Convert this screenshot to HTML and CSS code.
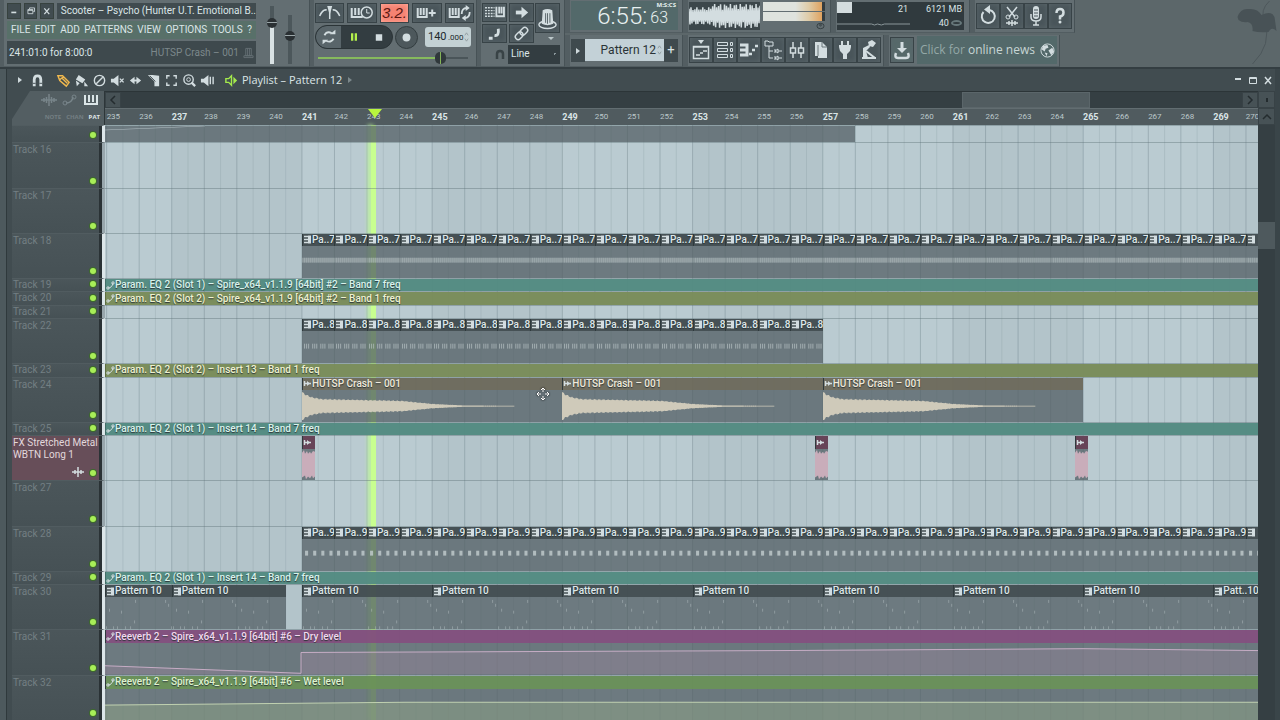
FILE: index.html
```
<!DOCTYPE html>
<html lang="en">
<head>
    <meta charset="UTF-8">
    <meta name="viewport" content="width=device-width, initial-scale=1.0">
    <title>Playlist - Pattern 12</title>
    <link rel="stylesheet" href="styles.css">
</head>
<body>
    <header class="toolbar">
        <section class="panel main-panel">
            <div class="main-left">
                <div class="title-row">
                    <button class="win-btn" aria-label="Minimize"><svg viewBox="0 0 14 14"><path d="M4 9h6" stroke-width="2"/></svg></button>
                    <button class="win-btn" aria-label="Restore"><svg viewBox="0 0 14 14"><path d="M5.500 5V3.500h6V8H10M3.500 5.500h6v5h-6zM3.500 6.500h6"/></svg></button>
                    <button class="win-btn" aria-label="Close"><svg viewBox="0 0 14 14"><path d="M4 4l6 7M10 4l-6 7" stroke-width="1.500"/></svg></button>
                    <div class="song-title">Scooter – Psycho (Hunter U.T. Emotional B..</div>
                </div>
                <nav class="menu">
                    <button>FILE</button><button>EDIT</button><button>ADD</button><button>PATTERNS</button><button>VIEW</button><button>OPTIONS</button><button>TOOLS</button><button>?</button>
                </nav>
                <div class="hint">
                    <span>241:01:0 for 8:00:0</span>
                    <span class="hint-clip">HUTSP Crash – 001 <svg viewBox="0 0 12 14"><path d="M3 2h6v8H3zM1 10h10v2H1zM5 2v8M7 2v8"/></svg></span>
                </div>
            </div>
            <input class="fader fader-volume" type="range" value="74" aria-label="Main volume">
            <input class="fader fader-pitch" type="range" value="58" aria-label="Main pitch">
        </section>

        <section class="panel transport">
            <div class="btn-row">
                <button class="tool" aria-label="Metronome"><svg viewBox="1 1 26 18"><path d="M4 13Q7 6 11 7M17 7Q21 6 24 13M14 7v9" stroke-width="1.500"/><path class="fill" d="M11.500 3h5l-2.500 9z"/></svg></button>
                <button class="tool" aria-label="Wait for input"><svg viewBox="1 1 26 18"><path d="M4 5v9h11M7.500 5v7M11 5v7" stroke-width="2"/><circle cx="19" cy="9.500" r="5.500" stroke-width="1.500"/><path d="M19 6v4h3"/></svg></button>
                <button class="tool count" aria-label="Countdown">3.2.</button>
                <button class="tool" aria-label="Blend recording"><svg viewBox="1 1 26 18"><path d="M5 5v9h9V5M8 5v7M11 5v7M16 10h7M19.500 6.500v7" stroke-width="2"/></svg></button>
                <button class="tool" aria-label="Loop recording"><svg viewBox="1 1 26 18"><path d="M4 5v9h9V5M7 5v7M10 5v7" stroke-width="2"/><path d="M16 11q0-6 5-6M24 9q0 6-5 6" stroke-width="1.800"/><path class="fill" d="M20 2l4 3-4 3zM20 12v6l-4-3z"/></svg></button>
            </div>
            <div class="play-row">
                <div class="play-group">
                    <button class="loop-btn" aria-label="Song mode"><svg viewBox="0 0 24 24"><path d="M7 10q3-5 8-2M17 14q-3 5-8 2" stroke-width="2"/><path class="fill" d="M13 9h6V4zM11 15H5v5z"/></svg></button>
                    <button class="pause-btn" aria-label="Pause"><svg viewBox="0 0 24 24"><path d="M10 8v8M14 8v8" stroke-width="2.500"/></svg></button>
                    <button class="stop-btn" aria-label="Stop"><svg viewBox="0 0 24 24"><path class="fill" d="M8.500 9h7v7h-7z"/></svg></button>
                </div>
                <button class="record-btn" aria-label="Record"><svg viewBox="0 0 24 24"><circle class="fill" cx="12" cy="12" r="4.500"/></svg></button>
                <label class="tempo"><input type="text" value="140" aria-label="Tempo"><small>.000</small><svg viewBox="0 0 6 12"><path d="M1 4l2-3 2 3M1 8l2 3 2-3"/></svg></label>
            </div>
            <input class="slider" type="range" value="84" aria-label="Song position">
        </section>

        <section class="panel snap">
            <div class="snap-grid">
                <button class="tool" aria-label="Typing keyboard"><svg viewBox="1 1 24 18"><path d="M3 5h10M3 8h10M3 11h10M3 14h10" stroke-dasharray="2 1" stroke-width="1.500"/><path d="M15 4v10h8V4M18 4v7M20.500 4v7" stroke-width="2"/></svg></button>
                <button class="tool" aria-label="Follow playback"><svg viewBox="1 1 24 18"><path d="M7 10h8" stroke-width="4"/><path class="fill" d="M13 4l7 6-7 6z"/></svg></button>
                <button class="tool" aria-label="Step edit"><svg viewBox="1 1 24 18"><path d="M7 15h4M13 12q5 1 4-7" stroke-width="3"/></svg></button>
                <button class="tool" aria-label="Link"><svg viewBox="1 1 24 18"><g transform="rotate(-45 13 10)"><rect x="5" y="7" width="9" height="6" rx="3" stroke-width="1.500"/><rect x="12" y="7" width="9" height="6" rx="3" stroke-width="1.500"/></g></svg></button>
            </div>
            <button class="tool hat" aria-label="Multilink"><svg viewBox="1 1 24 28"><ellipse cx="13" cy="22" rx="9" ry="4" stroke-width="1.500"/><path class="fill" d="M8 7q5-3 10 0l1 14q-6 3-12 0z"/><path d="M11 10v10M13 10v11M15.500 10v10" stroke="#59656a"/></svg></button>
            <div class="snap-row">
                <svg class="magnet-dim" viewBox="0 0 12 12"><path d="M3 11V6q0-3 3-3t3 3v5" stroke-width="2.500"/></svg>
                <select aria-label="Snap"><option>Line</option></select>
            </div>
            <span class="snap-caret"></span>
        </section>

        <div class="panel-stack">
            <div class="stack-row">
                <section class="panel time-panel"><div class="time"><b>6:55:</b><span>63</span><small>M:S:CS</small></div></section>
                <section class="panel scope-panel">
                    <svg class="scope" id="scope" viewBox="0 0 72 28" preserveAspectRatio="none"></svg>
                    <div class="meters"><i></i><i></i><svg viewBox="0 0 10 8"><ellipse cx="5" cy="4" rx="4" ry="3"/><circle cx="5" cy="3" r="1"/></svg></div>
                </section>
                <section class="panel cpu-panel">
                    <div class="cpu"><span class="cpu-load">21</span><span>6121 MB</span><svg viewBox="0 0 74 12" preserveAspectRatio="none"><path d="M0 8h35l3 1 3-1 4 1 3-1h26"/></svg><span>40 <em></em></span></div>
                </section>
                <section class="panel btn-panel">
                    <button class="tool" aria-label="Undo"><svg viewBox="1 1 22 24"><path d="M7.500 9a6.500 6.500 0 1 0 6-2" stroke-width="2"/><path class="fill" d="M14 2v9L8 6.500z"/></svg></button>
                    <button class="tool" aria-label="Cut"><svg viewBox="1 1 22 24"><path d="M7 4l8 10M17 4L9 14M6 20h12M9 18v4M12 17v6M15 18v4" stroke-width="1.500"/><circle cx="8" cy="14" r="2"/><circle cx="16" cy="14" r="2"/></svg></button>
                    <button class="tool" aria-label="Record audio"><svg viewBox="1 1 22 24"><rect class="fill" x="9" y="3" width="6" height="13" rx="3"/><path d="M7 11v3q0 4 5 4t5-4v-3M12 18v4M9 22h6" stroke-width="1.500"/><path d="M10 7h4M10 10h4M10 13h4" stroke="#49555a"/></svg></button>
                    <button class="tool" aria-label="Help"><svg viewBox="1 1 22 24"><path d="M8.500 10q0-4 3.500-4t3.500 3.500-3.500 4v3" stroke-width="2.500"/><circle class="fill" cx="12" cy="19" r="1.500"/></svg></button>
                </section>
            </div>
            <div class="stack-row">
                <section class="panel pattern-panel">
                    <button class="small-btn" aria-label="Pattern menu"><span class="caret-right"></span></button>
                    <button class="pattern-name">Pattern 12 <svg viewBox="0 0 6 12"><path d="M1 4l2-3 2 3M1 8l2 3 2-3"/></svg></button>
                    <button class="small-btn" aria-label="Add pattern">+</button>
                </section>
                <section class="panel btn-panel">
                    <button class="tool" aria-label="Playlist"><svg viewBox="1 1 22 24"><path class="fill" d="M9 3h6l-3 4z"/><path d="M4.500 9.500h15v12h-15zM4 10h16M7 18h4M11 16h3M14 14h4" stroke-width="1.500"/></svg></button>
                    <button class="tool" aria-label="Channel rack"><svg viewBox="1 1 22 24"><path d="M4.500 5.500h10v3h-10zM4.500 11.500h10v3h-10zM4.500 17.500h10v3h-10zM17.500 5.500h2v3h-2zM17.500 11.500h2v3h-2zM17.500 17.500h2v3h-2z"/></svg></button>
                    <button class="tool" aria-label="Piano roll"><svg viewBox="1 1 22 24"><path d="M3 8h7M3 13h7M3 18h7M10 6.500v13" stroke-width="3"/><path d="M12 17h3M15 13h3M18 9h3" stroke-width="2.500"/></svg></button>
                    <button class="tool" aria-label="Browser"><svg viewBox="1 1 22 24"><path d="M4 8V4h3l1 1h4v4H4zM8 9v12h4M8 14h4M14 12v4M17 14h4M14 14l3-2v4zM14 19v4M14 21l3-2v4zM17 21h4"/></svg></button>
                    <button class="tool" aria-label="Mixer"><svg viewBox="1 1 22 24"><path d="M8 5v16M16 5v16" stroke-width="1.500"/><path class="hole" d="M5.500 11h5v5h-5zM13.500 11h5v5h-5z" stroke-width="1.500"/></svg></button>
                    <button class="tool" aria-label="Project picker"><svg viewBox="1 1 22 24"><path class="fill" d="M6 5h7l5 5v11H9v-2H6z"/><path d="M13 5v5h5M9 19V8" stroke="#6a767a"/></svg></button>
                    <button class="tool" aria-label="Plugins"><svg viewBox="1 1 22 24"><path d="M9 4v5M15 4v5" stroke-width="2"/><path class="fill" d="M6 8h12v2l-1 4-3 3v5h-4v-5l-3-3-1-4z"/></svg></button>
                    <button class="tool" aria-label="Touch controllers"><svg viewBox="1 1 22 24"><path class="fill" d="M11 5l4-2 4 3-3 4-4-1zM6 11l6-3 1 2-4 4 2 7H6z"/><path d="M5 21h14M9 14l9 7" stroke-width="2"/></svg></button>
                </section>
                <section class="panel news-panel">
                    <button class="tool download" aria-label="Download"><svg viewBox="1 1 22 24"><path d="M12 5v7" stroke-width="3"/><path class="fill" d="M7 11h10l-5 5z"/><path d="M6 16q-2 5 2 5h8q4 0 2-5" stroke-width="2.500"/></svg></button>
                    <a class="news" href="#">Click for <b>online news</b><svg viewBox="0 0 16 16"><circle cx="8" cy="8" r="7"/><path class="fill" d="M3 3l5-1 1 3-3 1-1 3-3-2zM9 8l4-3 2 4-3 4zM5 10l3 1-1 3z"/></svg></a>
                </section>
            </div>
        </div>
        <svg class="fruit" viewBox="0 0 40 66"><path d="M32 1Q22 10 27 22Q35 44 15 64" fill="none"/><path class="fruit-body" d="M0 17Q3 8 11 9Q20 8 24 15Q34 10 37 17L39 31Q34 26 31 32Q22 33 15 31Q16 23 10 22Q5 23 1 20Z"/></svg>
    </header>

    <main class="playlist">
        <div class="playlist-bar">
            <span class="caret-right"></span>
            <button aria-label="Snap to grid"><svg viewBox="0 0 16 16"><path d="M4.500 14V7q0-4 3.500-4t3.500 4v7" stroke-width="3"/><path d="M3 11h3M10 11h3" stroke="#414c50"/></svg></button>
            <span class="bar-gap"></span>
            <button class="draw" aria-label="Draw"><svg viewBox="0 0 16 16"><path d="M2 3l5 0 7 7-3 4-7-6zM4 7l4-3M6 5l6 6" stroke-width="1.500"/></svg></button>
            <button aria-label="Paint"><svg viewBox="0 0 16 16"><path class="fill" d="M5 2l7 5-3 4-7-4zM2 8l4 3-3 3zM11 9l4 5h-4z"/></svg></button>
            <button aria-label="Delete"><svg viewBox="0 0 16 16"><circle cx="8" cy="8" r="5.500" stroke-width="1.500"/><path d="M4.500 11.500l7-7" stroke-width="1.500"/></svg></button>
            <button aria-label="Mute"><svg viewBox="0 0 16 16"><path class="fill" d="M1 6h3l5-4v12l-5-4H1z"/><path d="M10.500 6l4 4M14.500 6l-4 4" stroke-width="1.500"/></svg></button>
            <button aria-label="Slip"><svg viewBox="0 0 16 16"><path d="M4 8h8" stroke-width="2"/><path class="fill" d="M7 4v8L2 8zM9 4v8l5-4z"/></svg></button>
            <button aria-label="Slice"><svg viewBox="0 0 16 16"><path class="fill" d="M2 2h5l7 1v11H9V9z"/><path d="M4 3l6 6" stroke="#414c50"/></svg></button>
            <button aria-label="Select"><svg viewBox="0 0 16 16"><path d="M3 6V3h3M10 3h3v3M13 10v3h-3M6 13H3v-3" stroke-width="1.500"/></svg></button>
            <button aria-label="Zoom"><svg viewBox="0 0 16 16"><circle cx="7" cy="7" r="5" stroke-width="1.500"/><circle cx="7" cy="7" r="2"/><path d="M10 10l4 4" stroke-width="2.500"/></svg></button>
            <button aria-label="Playback"><svg viewBox="0 0 16 16"><path class="fill" d="M1 6h3l5-4v12l-5-4H1z"/><path d="M11 4v8M14 4v8" stroke-width="1.500"/></svg></button>
            <span class="bar-gap"></span>
            <h1><svg viewBox="0 0 16 16"><path d="M2 6h3l3-3v10l-3-3H2z" stroke-width="1.500"/><path class="fill" d="M10 4l4 4-4 4z"/></svg>Playlist – Pattern 12 <span class="caret-right dim"></span></h1>
            <div class="window-controls">
                <button aria-label="Minimize"><svg viewBox="0 0 12 12"><path d="M3 5h6" stroke-width="2"/></svg></button>
                <button aria-label="Maximize"><svg viewBox="0 0 12 12"><path d="M2.500 3.500h7v6h-7zM2 4.500h8"/></svg></button>
                <button aria-label="Close"><svg viewBox="0 0 12 12"><path d="M3 3l6 7M9 3l-6 7" stroke-width="1.500"/></svg></button>
            </div>
        </div>

        <div class="playlist-top">
            <div class="corner">
                <div class="corner-icons">
                    <svg viewBox="0 0 18 12"><path d="M1 6h16M4 4v4M6.500 3v6M9 0v12M11.500 3v6M14 4v4" stroke-width="1.500"/></svg>
                    <svg viewBox="0 0 18 12"><path d="M5 9q6 0 7-6" stroke-width="1.500"/><circle cx="4" cy="9" r="2"/><circle cx="13" cy="3" r="2"/></svg>
                    <svg class="on" viewBox="0 0 18 12"><path d="M3 1v9h12V1M7 1v7M11 1v7" stroke-width="2"/></svg>
                </div>
                <div class="corner-names"><span>NOTE</span><span>CHAN</span><span class="on">PAT</span></div>
            </div>
            <div class="timeline">
                <div class="h-scroll"><button aria-label="Scroll left"><svg viewBox="0 0 12 12"><path d="M8 2L4 6l4 4"/></svg></button><div class="h-track"><div class="h-thumb"></div></div><button aria-label="Scroll right"><svg viewBox="0 0 12 12"><path d="M4 2l4 4-4 4"/></svg></button></div>
                <div class="ruler" id="ruler"></div>
            </div>
            <div class="side-buttons"><button aria-label="Zoom"><i></i></button><button aria-label="Scroll up"><svg viewBox="0 0 12 12"><path d="M2 8l4-4 4 4"/></svg></button></div>
        </div>

        <div class="playlist-body">
            <div class="tracks" id="tracks">
                <div class="backdrop"><svg id="grid" preserveAspectRatio="none"></svg><div class="playhead" id="playhead"></div></div>
                <svg class="move-cursor" viewBox="0 0 14 14"><path d="M7 1v4M7 9v4M1 7h4M9 7h4M5 3l2-2 2 2M5 11l2 2 2-2M3 5L1 7l2 2M11 5l2 2-2 2"/></svg>
            </div>
            <div class="v-scroll"><div class="v-thumb"></div></div>
        </div>
    </main>
    <script src="script.js"></script>
</body>
</html>
```

FILE: styles.css
```
* {
    box-sizing: border-box;
}
body {
    margin: 0;
    height: 100vh;
    overflow: hidden;
    display: flex;
    flex-direction: column;
    background: #3d484c;
    color: #dbe5e7;
    font-family: Roboto, "Open Sans", sans-serif;
    font-size: 10px;
    line-height: 12px;
}
button, input, select {
    font: inherit;
    color: inherit;
    padding: 0;
    margin: 0;
    border: 0;
    background: none;
}
svg {
    display: block;
    fill: none;
    stroke: #d3dde0;
}
svg .fill {
    fill: #d3dde0;
    stroke: none;
}
svg .hole {
    fill: #49555a;
}

/* Toolbar */
.toolbar {
    display: flex;
    height: 69px;
    flex: none;
    background: #5c676a;
    border-bottom: 2px solid #343e42;
}
.panel {
    background: #636e72;
    border-right: 1px solid #475256;
    border-bottom: 1px solid #525d61;
    border-left: 4px solid #535e62;
}
.main-panel {
    display: flex;
    width: 310px;
    padding: 3px 9px 2px 3px;
}
.main-left {
    width: 249px;
    display: flex;
    flex-direction: column;
    gap: 2px;
}
.title-row {
    display: flex;
    gap: 3px;
    height: 16px;
}
.win-btn {
    width: 14px;
    background: #414c50;
    border: 1px solid #37423f;
}
.song-title {
    flex: 1;
    background: #404b4f;
    padding-left: 4px;
    line-height: 16px;
    white-space: nowrap;
}
.menu {
    height: 18px;
    background: #587069;
    display: flex;
    align-items: center;
    justify-content: space-between;
    padding: 0 4px;
    font-size: 10px;
}
.hint {
    flex: 1;
    background: #3e494d;
    display: flex;
    align-items: center;
    justify-content: space-between;
    padding: 0 2px;
}
.hint-clip {
    color: #7c888b;
    display: flex;
    align-items: center;
    gap: 4px;
}
.hint-clip svg {
    width: 11px;
    height: 14px;
    stroke: #667175;
}
.fader {
    appearance: none;
    writing-mode: vertical-lr;
    direction: rtl;
    width: 18px;
    margin: 3px 0 0 7px;
    height: 58px;
    background: linear-gradient(90deg, transparent 7px, #4c575b 7px, #4c575b 11px, transparent 11px);
}
.fader-volume {
    background: linear-gradient(90deg, transparent 7px, #d9e2e4 7px, #d9e2e4 11px, transparent 11px) 0 20px no-repeat, linear-gradient(90deg, transparent 7px, #4c575b 7px, #4c575b 11px, transparent 11px);
}
.fader-pitch {
    margin: 12px 0 0;
    height: 49px;
}
.fader::-webkit-slider-thumb {
    appearance: none;
    width: 10px;
    height: 10px;
    border-radius: 5px;
    background: linear-gradient(#2a3033, #2a3033 4px, #9ca7aa 4px, #9ca7aa 5px, #2a3033 5px);
}

.tool {
    width: 24px;
    height: 26px;
    background: #49555a;
    border: 1px solid #384347;
    box-shadow: inset 0 0 5px #5a666b;
}
.tool svg {
    width: 100%;
    height: 100%;
}
.transport {
    width: 167px;
    padding: 3px 2px 0 1px;
}
.btn-row {
    display: flex;
    gap: 3px;
}
.btn-row .tool {
    width: 30px;
    height: 20px;
}
.btn-row .count {
    background: #f58272;
    box-shadow: inset 0 0 5px #ffb0a0;
    color: #5a1812;
    font-family: "Liberation Sans", sans-serif;
    font-style: italic;
    font-size: 15px;
    line-height: 16px;
}
.play-row {
    display: flex;
    align-items: center;
    gap: 2px;
    height: 28px;
}
.play-group {
    display: flex;
    width: 78px;
    height: 24px;
    border-radius: 12px;
    background: #333d41;
    border: 1px solid #2b3437;
    overflow: hidden;
}
.play-group button {
    flex: 1;
}
.play-group .loop-btn {
    background: #59656a;
    border-radius: 11px 0 0 11px;
}
.play-group svg {
    height: 22px;
    margin: 0 auto;
}
.pause-btn svg {
    stroke: #b4f04c;
}
.record-btn {
    width: 23px;
    height: 23px;
    border-radius: 12px;
    background: #4d585c;
    border: 1px solid #333d40;
}
.tempo {
    display: flex;
    align-items: center;
    width: 46px;
    height: 20px;
    margin-left: 5px;
    padding-left: 3px;
    background: #c3d1d4;
    border-radius: 3px;
    color: #20292c;
}
.tempo input {
    width: 20px;
    font-size: 11px;
}
.tempo small {
    font-size: 8px;
    padding-top: 2px;
}
.tempo svg, .pattern-name svg {
    width: 5px;
    height: 12px;
    stroke: #8d999b;
}
.slider {
    appearance: none;
    display: block;
    width: 150px;
    height: 12px;
    margin: 1px 0 0 3px;
    background: linear-gradient(90deg, #86ba5d 120px, #4a5559 120px) 0 5px / 100% 2px no-repeat;
}
.slider::-webkit-slider-thumb {
    appearance: none;
    width: 11px;
    height: 12px;
    border-radius: 5px;
    background: linear-gradient(90deg, #30383b 5px, #84b458 5px, #84b458 6px, #30383b 6px);
}
.snap {
    display: grid;
    grid-template-columns: 52px 26px;
    grid-template-rows: 39px 24px;
    column-gap: 1px;
    width: 88px;
    padding: 3px 0 0 1px;
    position: relative;
}
.snap-grid {
    display: grid;
    grid-template-columns: 25px 25px;
    gap: 2px;
    height: 39px;
}
.snap-grid .tool {
    width: 25px;
    height: 19px;
}
.hat {
    width: 25px;
    height: 30px;
}
.snap-caret {
    position: absolute;
    right: 10px;
    top: 37px;
    border: 3px solid transparent;
    border-top-color: #bcc8ca;
}
.snap-row {
    grid-column: span 2;
    display: flex;
    align-items: center;
    padding-left: 12px;
    gap: 2px;
}
.magnet-dim {
    width: 12px;
    height: 12px;
    stroke: #394346;
}
.snap-row select {
    appearance: none;
    width: 52px;
    height: 19px;
    background: linear-gradient(135deg, #8a979b 2px, transparent 2px) 46px 8px / 4px 4px no-repeat #333d41;
    padding-left: 3px;
}
.panel-stack {
    flex: 1;
    display: flex;
    flex-direction: column;
    gap: 2px;
}
.stack-row {
    display: flex;
    height: 33px;
}
.stack-row .panel {
    display: flex;
    align-items: center;
    padding: 0 2px 0 1px;
    border-left-width: 5px;
}
.stack-row .time-panel, .stack-row .pattern-panel {
    width: 118px;
}
.time {
    width: 107px;
    height: 29px;
    background: #53696a;
    color: #e8f1f1;
    display: flex;
    justify-content: flex-end;
    gap: 3px;
    padding-right: 10px;
    position: relative;
}
.time b {
    font-size: 24px;
    line-height: 30px;
    font-weight: 300;
}
.time span {
    font-size: 16px;
    line-height: 16px;
    font-weight: 300;
    align-self: flex-end;
    margin-bottom: 4px;
}
.time small {
    position: absolute;
    right: 2px;
    top: 0;
    font: bold 6px/8px "Open Sans", sans-serif;
}
.stack-row .scope-panel {
    width: 148px;
    gap: 3px;
}
.scope {
    width: 71px;
    height: 28px;
    background: #3c474b;
}
.meters {
    width: 62px;
    height: 28px;
    display: flex;
    flex-direction: column;
    gap: 1px;
}
.meters i {
    height: 9px;
    border-right: 3px solid #333c40;
    background: linear-gradient(90deg, #dfe3de 55%, #dfcba6 78%, #e0a25f);
}
.meters svg {
    width: 9px;
    height: 8px;
    margin-left: auto;
    stroke: #333d40;
}
.stack-row .cpu-panel {
    width: 139px;
}
.cpu {
    width: 127px;
    height: 28px;
    background: #303a3e;
    display: grid;
    grid-template-columns: 74px 1fr;
    grid-template-rows: 14px 14px;
    padding-right: 2px;
    text-align: right;
    font-size: 9px;
    line-height: 14px;
}
.cpu-load {
    border-left: 15px solid #d4dddf;
    height: 11px;
    padding-right: 3px;
}
.cpu svg {
    width: 73px;
    height: 12px;
    stroke: #8b979a;
}
.cpu em {
    display: inline-block;
    width: 11px;
    height: 6px;
    border: 2px solid #66777a;
    border-radius: 50%;
}
.stack-row .btn-panel:last-child {
    width: 105px;
}
.small-btn {
    width: 14px;
    height: 23px;
    background: #3f4a4e;
    font-size: 13px;
}
.caret-right {
    display: inline-block;
    border-left: 4px solid #cfd9dc;
    border-top: 3px solid transparent;
    border-bottom: 3px solid transparent;
}
.caret-right.dim {
    border-left-color: #7c888b;
    margin-left: 3px;
}
.pattern-name {
    width: 79px;
    height: 22px;
    background: #c3d1d7;
    color: #2a3336;
    display: flex;
    align-items: center;
    justify-content: flex-end;
    gap: 1px;
    padding-right: 2px;
    font-size: 12px;
}
.stack-row .news-panel {
    width: 176px;
    gap: 3px;
}
.download {
    background: #56696a;
}
.news {
    flex: 1;
    height: 28px;
    background: #53696a;
    color: #93a8a7;
    display: flex;
    align-items: center;
    gap: 3px;
    padding-left: 3px;
    text-decoration: none;
    font-family: "Open Sans", sans-serif;
    font-size: 12px;
    white-space: nowrap;
}
.news b {
    font-weight: normal;
    color: #c7d5d4;
}
.news svg {
    width: 15px;
    height: 15px;
    margin-left: 2px;
}
.fruit {
    width: 41px;
    height: 66px;
    margin-right: 2px;
    stroke: #4d575b;
}
.fruit .fruit-body {
    fill: #485256;
    stroke: none;
}

/* Playlist window */
.playlist {
    flex: 1;
    min-height: 0;
    display: flex;
    flex-direction: column;
    background: #414c50;
    border-left: 6px solid #4d595d;
    border-right: 5px solid #3a4549;
    box-shadow: inset 1px 0 #2f393c;
}
.playlist-bar {
    display: flex;
    align-items: center;
    height: 22px;
    flex: none;
    padding-left: 12px;
}
.playlist-bar button {
    width: 18px;
    height: 16px;
}
.playlist-bar .caret-right + button {
    margin-left: 6px;
}
.playlist-bar svg {
    height: 15px;
    margin: 0 auto;
}
.bar-gap {
    width: 8px;
}
.draw svg {
    stroke: #f0b84e;
}
.playlist-bar h1 {
    display: flex;
    align-items: center;
    gap: 3px;
    margin: 0;
    font-family: "Open Sans", sans-serif;
    font-size: 11px;
    font-weight: normal;
}
.playlist-bar h1 svg {
    stroke: #a4ea4c;
}
.playlist-bar h1 .fill {
    fill: #a4ea4c;
}
.window-controls {
    margin-left: auto;
    display: flex;
}
.window-controls button {
    width: 15px;
}
.window-controls svg {
    height: 12px;
}
.playlist-top {
    display: flex;
    height: 34px;
    flex: none;
    padding-left: 6px;
}
.corner {
    width: 93px;
    background: #535e62;
    clip-path: polygon(18px 0, 100% 0, 100% 100%, 0 100%, 0 28px);
    border-right: 1px solid #2d3639;
}
.corner-icons {
    display: flex;
    justify-content: flex-end;
    gap: 3px;
    padding: 3px 4px 0 0;
}
.corner-icons svg {
    width: 18px;
    height: 12px;
    stroke: #78858a;
}
.corner-icons .on {
    stroke: #dbe5e7;
}
.corner-names {
    display: flex;
    justify-content: flex-end;
    gap: 5px;
    padding: 5px 4px 0 0;
    font-family: "Open Sans", sans-serif;
    font-size: 6px;
    font-weight: bold;
    color: #737f83;
}
.corner-names .on {
    color: #e0e8ea;
}
.timeline {
    flex: 1;
    min-width: 0;
}
.h-scroll {
    display: flex;
    height: 17px;
    background: #353f43;
    border-top: 1px solid #2c3538;
}
.h-scroll button, .side-buttons button {
    width: 16px;
    height: 16px;
    background: #475256;
    border: 1px solid #384246;
}
.h-scroll svg, .side-buttons svg {
    width: 12px;
    height: 12px;
    margin: 0 auto;
    stroke: #242c2f;
    stroke-width: 1.5px;
}
.h-track {
    flex: 1;
    display: flex;
}
.h-thumb {
    width: 11.4%;
    margin-left: 75%;
    background: #515c60;
    border: 1px solid #5b666a;
}
.ruler {
    display: flex;
    height: 17px;
    overflow: hidden;
    background: #505b5f;
    border-top: 1px solid #626d71;
    position: relative;
    font-size: 8px;
    line-height: 16px;
    color: #bcc8cb;
}
.ruler b {
    font-size: 9px;
    color: #dbe5e7;
}
.marker {
    position: absolute;
    top: 0;
    border: 7px solid transparent;
    border-top: 9px solid #b8f53e;
    border-bottom: 0;
}
.side-buttons {
    width: 17px;
}
.side-buttons button {
    display: block;
    width: 17px;
    height: 17px;
}
.side-buttons i {
    display: block;
    width: 2px;
    height: 4px;
    margin: 0 auto;
    background: #242c2f;
}
.playlist-body {
    flex: 1;
    min-height: 0;
    display: flex;
    padding-left: 6px;
}
.v-scroll {
    width: 17px;
    background: #353f43;
}
.v-thumb {
    height: 27px;
    margin-top: 97px;
    background: #4e595d;
}
.tracks {
    flex: 1;
    min-width: 0;
    display: flex;
    flex-direction: column;
    position: relative;
}
.backdrop {
    position: absolute;
    inset: 0 0 0 93px;
    background: #bacbd1;
}
.backdrop svg {
    width: 100%;
    height: 100%;
}
.playhead {
    position: absolute;
    top: 0;
    bottom: 0;
    width: 5px;
    background: #c8ff90;
    box-shadow: -3px 0 4px #bdf59a;
}
.move-cursor {
    position: absolute;
    left: 524px;
    top: 262px;
    width: 14px;
    height: 14px;
    stroke: #fff;
    filter: drop-shadow(0 0 1px #000);
    z-index: 3;
}
.track {
    flex: 34 1 0;
    min-height: 0;
    display: flex;
    position: relative;
}
.track.small {
    flex-grow: 10;
}
.track.cut {
    flex-grow: 13;
}
.track-head {
    width: 93px;
    background: linear-gradient(#4b565a, #465155);
    border-right: 3px solid #dce6e9;
    border-top: 1px solid #515c60;
    box-shadow: inset -3px 0 #2a3235;
    padding-left: 1px;
    display: flex;
    color: #737f83;
    line-height: 12px;
    white-space: pre;
}
.track-head span {
    flex: 1;
    width: 0;
}
.track:not(.small) .track-head span {
    padding-top: 1px;
}
.track-head.muted-strip {
    border-right-color: #98a6ac;
}
.track-head.fx {
    background: #674e59;
    color: #e2d8dc;
}
.led {
    flex: none;
    align-self: flex-end;
    width: 6px;
    height: 6px;
    margin: 0 6px 4px 0;
    border-radius: 3px;
    background: #a8ee58;
    box-shadow: 0 0 0 1px #3d6a2c;
}
.track-head svg {
    flex: none;
    width: 12px;
    height: 10px;
    align-self: flex-end;
    margin: 0 6px 3px 0;
}
.lane {
    flex: 1;
    min-width: 0;
    display: flex;
    overflow: hidden;
    border-top: 1px solid rgba(90, 110, 115, 0.4);
}
.clip {
    flex: none;
    min-width: 0;
    display: flex;
    flex-direction: column;
}
.clip-head {
    flex: none;
    height: 12px;
    display: flex;
    align-items: center;
    overflow: hidden;
    white-space: nowrap;
    background: rgba(66, 76, 80, 0.96);
    border-left: 1px solid #2f3a3d;
    font-weight: 500;
    line-height: 12px;
    color: #dfe8ea;
    text-shadow: 0 1px 1px #2b3437;
}
.clip-head svg {
    flex: none;
    width: 9px;
    height: 9px;
}
.clip-body {
    flex: 1;
    min-height: 0;
    background: rgba(83, 95, 100, 0.75);
}
.clip-body svg {
    width: 100%;
    height: 100%;
}
.small .clip-head {
    height: 100%;
}
.teal .clip-head {
    background: rgba(82, 138, 129, 0.96);
    color: #d8f3ec;
    border-color: #426e68;
}
.olive .clip-head {
    background: rgba(121, 139, 88, 0.96);
    color: #eef2d0;
    border-color: #5d6e42;
}
.green .clip-head {
    background: rgba(103, 142, 86, 0.96);
    color: #dff3cf;
    height: 13px;
}
.purple .clip-head {
    background: rgba(128, 77, 124, 0.96);
    color: #f3d9f0;
    height: 13px;
}
.audio .clip-head {
    background: rgba(107, 104, 90, 0.95);
    color: #f0eadc;
}
.pink .clip-head {
    background: #674458;
    height: 13px;
}
.lines {
    stroke: none;
    fill: #c3cdcf;
}
.wave {
    stroke: none;
    fill: #cfcaba;
}
.pink .wave {
    fill: #c9adba;
}
```

FILE: script.js
```
const firstBar = 234.95;
const visibleBars = 35.42;
const percent = bars => (bars / visibleBars * 100) + '%';

const icons = {
    pattern: '<svg viewBox="0 0 9 9"><path d="M1 1.500h4M1 4.500h4M1 7.500h4" stroke-width="1.500"/><path class="fill" d="M5 0.500h3v8H5z"/></svg>',
    audio: '<svg viewBox="0 0 9 9"><path d="M1.500 2v5M1 4.500h7" stroke-width="1.500"/><path class="fill" d="M4 2l3 2.500L4 7z"/></svg>',
    auto: '<svg viewBox="0 0 9 9"><path d="M2 7q4 0 5-5"/><circle cx="2" cy="7" r="1.200"/><circle cx="7" cy="2" r="1.200"/></svg>'
};

function rects(list) {
    return list.map(r => `<rect x="${r[0]}" y="${r[1]}" width="${r[2]}" height="${r[3]}"/>`).join('');
}

function bodySvg(width, content) {
    return `<svg viewBox="0 0 ${width} 33" preserveAspectRatio="none">${content}</svg>`;
}

function steps(perBar, width, y, height) {
    const list = [];
    for (let i = 0; i < perBar; i++) {
        list.push([2 + i * 32 / perBar, y, width, height]);
    }
    return list;
}

const roll = bodySvg(32, `<g class="lines"><rect y="12" width="32" height="5" opacity="0.35"/><g opacity="0.3">${rects(steps(16, 1, 12, 5))}</g></g>`);

let ticks = [];
for (let i = 0; i < 4; i++) {
    for (let j = 0; j < 3; j++) {
        ticks.push([2 + i * 8 + j * 2, 13, 1, 5]);
    }
}
const hats = bodySvg(32, `<g class="lines" opacity="0.6">${rects(ticks)}</g>`);
const kicks = bodySvg(32, `<g class="lines" opacity="0.8">${rects(steps(4, 3, 12, 5).map(r => [r[0] + 1, r[1], r[2], r[3]]))}</g>`);

function melody(width) {
    const list = [];
    for (let x = 0; x < width; x += 65) {
        [[4, 12], [16, 14], [29, 24], [30, 3], [60, 3], [63, 7]].forEach(p => list.push([x + p[0], p[1], 1, 3]));
        [1, 8, 12, 20, 25].forEach(t => list.push([x + t, 30, 1, 3]));
    }
    return bodySvg(width, `<g class="lines" opacity="0.4">${rects(list)}</g>`);
}

function crash() {
    const points = [[0, 16], [4, 13], [10, 10], [20, 8], [60, 7], [100, 6], [130, 2.5], [160, 0.8], [212, 0.4]];
    const top = [], bottom = [];
    for (let x = 0; x <= 212; x++) {
        const i = points.findIndex(p => p[0] >= x);
        const a = points[Math.max(i - 1, 0)], b = points[i];
        const t = b[0] === a[0] ? 0 : (x - a[0]) / (b[0] - a[0]);
        const size = a[1] + (b[1] - a[1]) * t;
        const noise = 0.88 + 0.12 * Math.sin(x * 2.3) * Math.cos(x * 0.9);
        top.push(`${x},${16.5 - size * noise}`);
        bottom.unshift(`${x},${16.5 + size * noise}`);
    }
    return bodySvg(260, `<polygon class="wave" points="${top.concat(bottom).join(' ')}"/>`);
}

const stretched = bodySvg(13, '<polygon class="wave" points="0,4 2,1 3,5 5,2 6,5 8,3 9,5 11,2 13,3 13,29 11,31 10,28 8,31 6,29 4,32 3,28 0,30"/>');
const dryLine = bodySvg(1153, '<path d="M0 24L196 32V10L675 8L978 6L1153 8V33H0Z" fill="#a086a0" fill-opacity="0.35" stroke="none"/><path d="M0 24L196 32V10L675 8L978 6L1153 8" stroke="#c9aec6"/>');
const wetLine = bodySvg(1153, '<path d="M0 17L300 14H1153V33H0Z" fill="#93a888" fill-opacity="0.45" stroke="none"/><path d="M0 17L300 14H1153" stroke="#c2d3b2"/>');
const cutLine = bodySvg(750, '<path d="M0 8L100 0" stroke="#b3bfc4"/>');

const end = firstBar + visibleBars;

function patternClips(name, last, body) {
    const clips = [];
    for (let bar = 241; bar < last; bar++) {
        clips.push({ from: bar, to: bar + 1, icon: 'pattern', name: bar + 1 > end ? '' : name, body });
    }
    return clips;
}

function automation(name, color, body) {
    return [{ from: firstBar, to: end, icon: 'auto', name, color, body }];
}

const crashClips = [241, 249, 257].map(bar => ({ from: bar, to: bar + 8, icon: 'audio', name: 'HUTSP Crash – 001', color: 'audio', body: crash() }));
const fxClips = [241, 256.75, 264.75].map(bar => ({ from: bar, to: bar + 0.4, icon: 'audio', name: '', color: 'pink', body: stretched }));
const melodyClips = [[firstBar, 237], [237, 240.5], [241, 245], [245, 249], [249, 253], [253, 257], [257, 261], [261, 265], [265, 269], [269, end]].map(c => (
    { from: c[0], to: c[1], icon: 'pattern', name: c[1] === end ? 'Patt..10' : 'Pattern 10', body: melody((c[1] - c[0]) * 32.5) }
));

const tracks = [
    { name: '', size: 'cut', clips: [{ from: firstBar, to: 258, body: cutLine }] },
    { name: 'Track 16', clips: [], dim: true },
    { name: 'Track 17', clips: [], dim: true },
    { name: 'Track 18', clips: patternClips('Pa..7', end, roll) },
    { name: 'Track 19', size: 'small', clips: automation('Param. EQ 2 (Slot 1) – Spire_x64_v1.1.9 [64bit] #2 – Band 7 freq', 'teal') },
    { name: 'Track 20', size: 'small', clips: automation('Param. EQ 2 (Slot 2) – Spire_x64_v1.1.9 [64bit] #2 – Band 1 freq', 'olive') },
    { name: 'Track 21', size: 'small', clips: [], dim: true },
    { name: 'Track 22', clips: patternClips('Pa..8', 257, hats) },
    { name: 'Track 23', size: 'small', clips: automation('Param. EQ 2 (Slot 2) – Insert 13 – Band 1 freq', 'olive') },
    { name: 'Track 24', clips: crashClips },
    { name: 'Track 25', size: 'small', clips: automation('Param. EQ 2 (Slot 1) – Insert 14 – Band 7 freq', 'teal') },
    { name: 'FX Stretched Metal\nWBTN Long 1', clips: fxClips, fx: true, dim: true },
    { name: 'Track 27', clips: [], dim: true },
    { name: 'Track 28', clips: patternClips('Pa..9', end, kicks) },
    { name: 'Track 29', size: 'small', clips: automation('Param. EQ 2 (Slot 1) – Insert 14 – Band 7 freq', 'teal') },
    { name: 'Track 30', clips: melodyClips },
    { name: 'Track 31', clips: automation('Reeverb 2 – Spire_x64_v1.1.9 [64bit] #6 – Dry level', 'purple', dryLine) },
    { name: 'Track 32', clips: automation('Reeverb 2 – Spire_x64_v1.1.9 [64bit] #6 – Wet level', 'green', wetLine) }
];

function drawTracks() {
    const container = document.getElementById('tracks');
    tracks.forEach(track => {
        let position = firstBar;
        const clips = track.clips.map(clip => {
            const gap = percent(clip.from - position);
            position = clip.to;
            const head = clip.icon ? `<div class="clip-head">${icons[clip.icon]}${clip.name}</div>` : '';
            const body = clip.body ? `<div class="clip-body">${clip.body}</div>` : '';
            return `<div class="clip ${clip.color || ''}" style="margin-left: ${gap}; width: ${percent(clip.to - clip.from)}">${head}${body}</div>`;
        }).join('');
        const row = document.createElement('div');
        row.className = 'track ' + (track.size || '');
        const wave = track.fx ? '<svg viewBox="0 0 12 10"><path d="M0 5h12M3 3v4M6 0v10M9 3v4" stroke-width="1.500"/></svg>' : '';
        row.innerHTML = `<div class="track-head ${track.fx ? 'fx' : ''} ${track.dim ? 'muted-strip' : ''}"><span>${track.name}</span>${wave}<i class="led"></i></div><div class="lane">${clips}</div>`;
        container.appendChild(row);
    });
}

function drawRuler() {
    let html = '';
    for (let bar = 235; bar <= 270; bar++) {
        const tag = bar % 4 === 1 ? 'b' : 'span';
        const gap = bar === 235 ? percent(235 - firstBar) : '0';
        html += `<${tag} style="flex: 0 0 ${percent(Math.min(1, end - bar))}; margin-left: ${gap}">${bar}</${tag}>`;
    }
    html += `<i class="marker" style="left: ${percent(243.02 - firstBar)}"></i>`;
    document.getElementById('ruler').innerHTML = html;
}

// Bars alternate in groups of four, with a thin line on every half bar
function drawGrid() {
    const grid = document.getElementById('grid');
    grid.setAttribute('viewBox', `${firstBar} 0 ${visibleBars} 10`);
    let html = '';
    for (let bar = 237; bar < 271; bar += 8) {
        html += `<rect x="${bar}" y="0" width="4" height="10" fill="#b3c4ca" stroke="none"/>`;
    }
    for (let bar = 235; bar < 271; bar += 0.5) {
        const opacity = bar % 1 ? 0.18 : 0.4;
        html += `<path d="M${bar} 0v10" stroke="#6f8389" stroke-opacity="${opacity}" vector-effect="non-scaling-stroke"/>`;
    }
    grid.innerHTML = html;
    document.getElementById('playhead').style.left = percent(243.11 - firstBar);
}

function drawScope() {
    let d = 'M0 14';
    for (let x = 0; x <= 72; x += 1) {
        const size = x < 24 ? 9 + 2 * Math.sin(x) : 12;
        d += `L${x} ${14 + (x % 2 ? size : -size) * (x < 26 ? 0.8 : Math.abs(Math.cos(x * 0.6)) * 0.5 + 0.5)}`;
    }
    document.getElementById('scope').innerHTML = `<path d="${d}" stroke-width="1.500"/>`;
}

drawTracks();
drawRuler();
drawGrid();
drawScope();
```
